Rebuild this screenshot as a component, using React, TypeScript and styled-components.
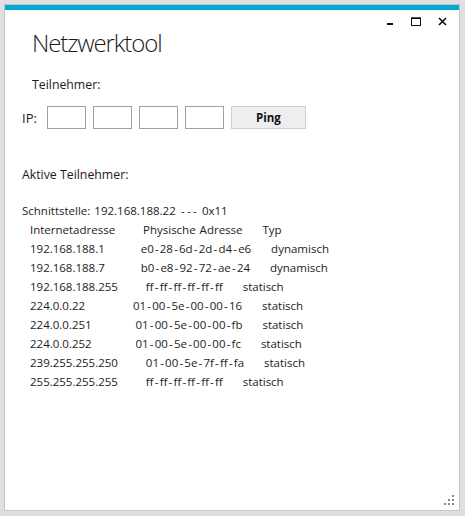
import React from "react";
import styled, { createGlobalStyle } from "styled-components";

const GlobalStyle = createGlobalStyle`
  html, body {
    margin: 0;
    padding: 0;
    background: #e0e0e0;
  }
  body {
    font-family: "Open Sans", "Noto Sans", "DejaVu Sans", sans-serif;
    color: #1c1c1c;
  }
`;

// output of "arp -a", shown as is
const arpLines = [
  "Schnittstelle: 192.168.188.22 --- 0x11",
  "  Internetadresse       Physische Adresse     Typ",
  "  192.168.188.1         e0-28-6d-2d-d4-e6     dynamisch",
  "  192.168.188.7         b0-e8-92-72-ae-24     dynamisch",
  "  192.168.188.255       ff-ff-ff-ff-ff-ff     statisch",
  "  224.0.0.22            01-00-5e-00-00-16     statisch",
  "  224.0.0.251           01-00-5e-00-00-fb     statisch",
  "  224.0.0.252           01-00-5e-00-00-fc     statisch",
  "  239.255.255.250       01-00-5e-7f-ff-fa     statisch",
  "  255.255.255.255       ff-ff-ff-ff-ff-ff     statisch",
];

const Window = styled.div`
  position: relative;
  box-sizing: border-box;
  width: 456px;
  height: 507px;
  margin: 4px 0 0 4px;
  background: #ffffff;
  border: 1px solid #c6c6c6;
  display: flex;
  flex-direction: column;
`;

const AccentBar = styled.div`
  height: 5px;
  background: #04a9d7;
`;

const Controls = styled.div`
  display: flex;
  justify-content: flex-end;
  padding-right: 4px;
  height: 22px;
`;

const ControlButton = styled.button`
  width: 26px;
  height: 22px;
  padding: 0;
  border: none;
  background: transparent;
  display: flex;
  align-items: center;
  justify-content: center;
  color: #111;
  cursor: pointer;
  svg {
    display: block;
  }
`;

const Content = styled.div`
  display: flex;
  flex-direction: column;
  padding: 0 0 0 17px;
`;

const Title = styled.h1`
  margin: -4px 0 0 10px;
  font-family: "Open Sans", "Noto Sans", sans-serif;
  font-weight: 300;
  font-size: 24px;
  line-height: 30px;
  letter-spacing: -1.1px;
  color: #1a1a1a;
`;

const Label = styled.div<{ $indent?: number }>`
  margin-left: ${(p) => p.$indent ?? 0}px;
  font-size: 12.3px;
  line-height: 18px;
  color: #1c1c1c;
`;

const IpRow = styled.div`
  display: flex;
  align-items: center;
  gap: 7px;
  margin-top: 12px;
`;

const IpLabel = styled.span`
  font-size: 13px;
  margin-right: 3px;
  color: #1c1c1c;
`;

const OctetBox = styled.input`
  box-sizing: border-box;
  width: 39px;
  height: 23px;
  margin: 0;
  padding: 0 3px;
  border: 1px solid #a0a0a0;
  background: #fff;
  outline: none;
  font-family: inherit;
  font-size: 12px;
`;

const PingButton = styled.button`
  box-sizing: border-box;
  width: 75px;
  height: 23px;
  border: 1px solid #cfcfcf;
  background: #eeeeee;
  font-family: "Open Sans", "Noto Sans", sans-serif;
  font-weight: 700;
  font-size: 11.5px;
  color: #111;
  padding: 0;
`;

const Output = styled.div`
  font-family: "Open Sans", "Noto Sans", sans-serif;
  font-size: 11.5px;
  line-height: 19px;
  word-spacing: 1px;
  color: #1c1c1c;
`;

const OutputLine = styled.div`
  white-space: pre;
`;

const Dash = styled.span`
  padding: 0 1.2px;
`;

const Grip = styled.svg`
  position: absolute;
  right: 4px;
  bottom: 3px;
`;

const Section = styled.div<{ $top: number }>`
  margin-top: ${(p) => p.$top}px;
`;

const renderLine = (line: string) =>
  line
    .split("-")
    .flatMap((part, i) => (i === 0 ? [part] : [<Dash key={i}>-</Dash>, part]));

export default function App() {
  return (
    <>
      <GlobalStyle />
      <Window>
        <AccentBar />
        <Controls>
          <ControlButton aria-label="Minimieren">
            <svg width="9" height="9" viewBox="0 0 9 9">
              <rect x="1" y="6" width="6" height="2" fill="#111" />
            </svg>
          </ControlButton>
          <ControlButton aria-label="Maximieren">
            <svg width="10" height="9" viewBox="0 0 10 9">
              <rect x="0.5" y="1" width="9" height="7.5" fill="none" stroke="#111" strokeWidth="1" />
              <rect x="0" y="0.5" width="10" height="1.5" fill="#111" />
            </svg>
          </ControlButton>
          <ControlButton aria-label="Schließen">
            <svg width="9" height="9" viewBox="0 0 9 9">
              <path d="M1 1 L8 8 M8 1 L1 8" stroke="#111" strokeWidth="1.6" />
            </svg>
          </ControlButton>
        </Controls>
        <Content>
          <Title>Netzwerktool</Title>
          <Section $top={18}>
            <Label $indent={10}>Teilnehmer:</Label>
          </Section>
          <IpRow>
            <IpLabel>IP:</IpLabel>
            <OctetBox />
            <OctetBox />
            <OctetBox />
            <OctetBox />
            <PingButton>Ping</PingButton>
          </IpRow>
          <Section $top={37}>
            <Label>Aktive Teilnehmer:</Label>
          </Section>
          <Section $top={17}>
            <Output>
              {arpLines.map((line, i) => (
                <OutputLine key={i}>{renderLine(line)}</OutputLine>
              ))}
            </Output>
          </Section>
        </Content>
        <Grip width="12" height="12" viewBox="0 0 12 12">
          <rect x="9" y="0" width="2" height="2" fill="#8a8a8a" />
          <rect x="5" y="4" width="2" height="2" fill="#8a8a8a" />
          <rect x="9" y="4" width="2" height="2" fill="#8a8a8a" />
          <rect x="1" y="8" width="2" height="2" fill="#8a8a8a" />
          <rect x="5" y="8" width="2" height="2" fill="#8a8a8a" />
          <rect x="9" y="8" width="2" height="2" fill="#8a8a8a" />
        </Grip>
      </Window>
    </>
  );
}
